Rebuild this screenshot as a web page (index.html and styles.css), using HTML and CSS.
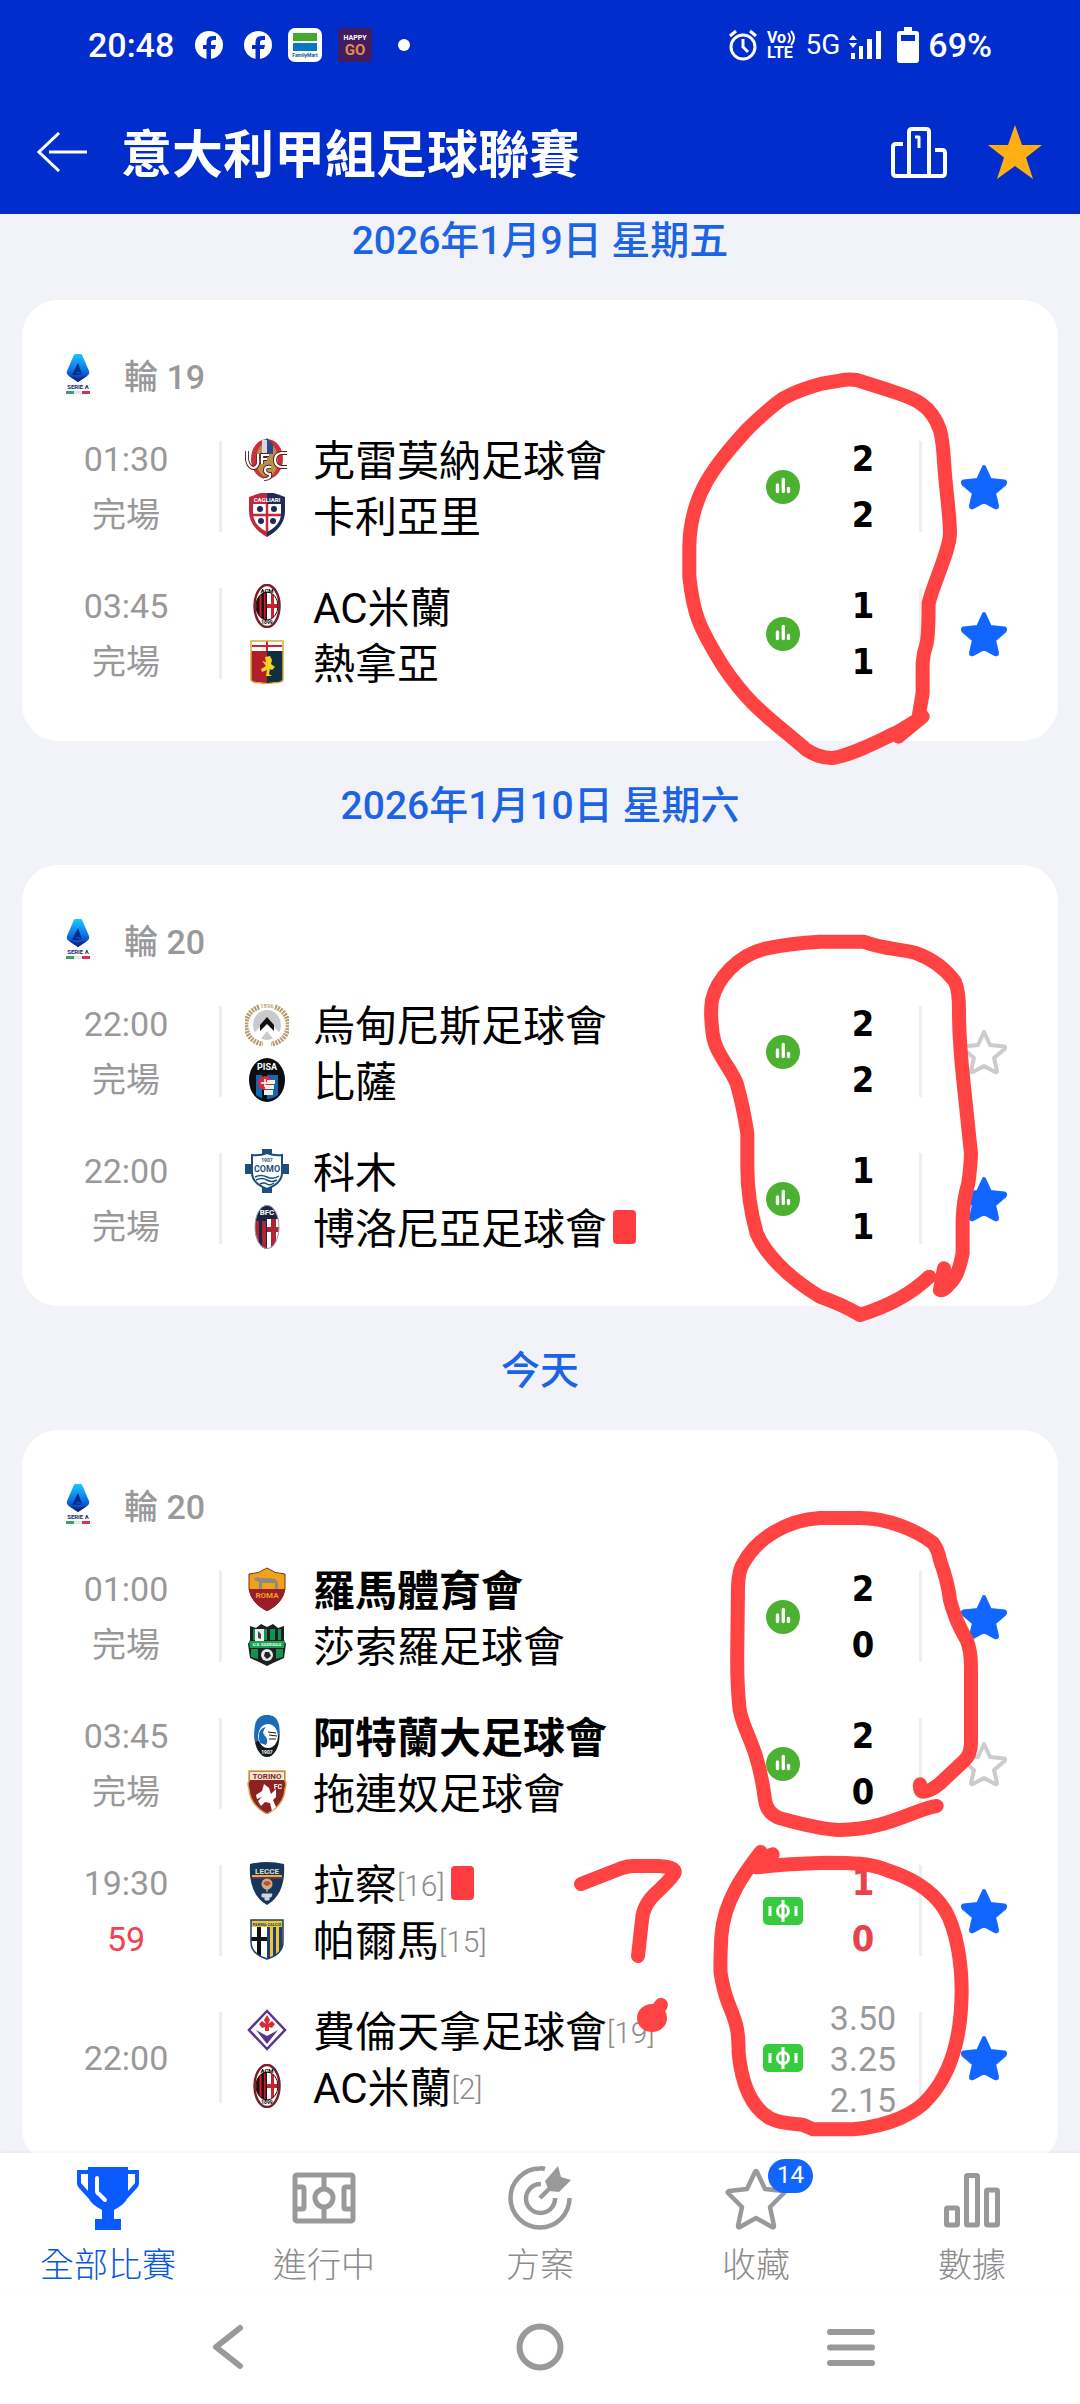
FILE: index.html
```html
<!DOCTYPE html>
<html lang="zh-Hant">
<head>
    <meta charset="UTF-8">
    <meta name="viewport" content="width=device-width, initial-scale=1.0">
    <title>意大利甲組足球聯賽</title>
    <link rel="stylesheet" href="styles.css">
</head>
<body>
    <!-- gradients and clip shapes for the crests -->
    <svg class="paints" aria-hidden="true">
        <defs>
            <linearGradient id="serieBlue" x1="0" y1="0" x2="0" y2="1">
                <stop offset="0" stop-color="#19c8fa"/>
                <stop offset=".6" stop-color="#0b6fe8"/>
                <stop offset="1" stop-color="#0a2a8c"/>
            </linearGradient>
            <clipPath id="milanClip"><ellipse cx="22" cy="22" rx="11" ry="14"/></clipPath>
            <clipPath id="bolognaClip"><ellipse cx="22" cy="22" rx="12" ry="22"/></clipPath>
            <clipPath id="genoaClip"><path d="M6 1h32v38q0 3-5 3.500Q25 43 22 44 19 43 11 42.500 6 42 6 39z"/></clipPath>
            <clipPath id="parmaClip"><path d="M6 3h32v22q0 12-16 17Q6 37 6 25z"/></clipPath>
        </defs>
    </svg>
    <!-- shared icons -->
    <svg class="sprite" aria-hidden="true">
        <symbol id="serieA" viewBox="0 0 24 40">
            <path d="M9 0h6q1 0 2 3l6 14q1 3-2 5l-9 6-9-6q-3-2-2-5L7 3q1-3 2-3z" fill="url(#serieBlue)"/>
            <path d="M12 9l4 11-4-2H9l7 3H6z" fill="#0a2a8c"/>
            <path d="M3 22l9 2 9-2-9 6z" fill="#0a2a8c"/>
            <text x="12" y="35" font-size="6" font-weight="700" text-anchor="middle" fill="#1a2870">SERIE A</text>
            <path d="M0 37h8v3H0z" fill="#3aa267"/><path d="M8 37h8v3H8z" fill="#e6e6e6"/><path d="M16 37h8v3h-8z" fill="#dc2f52"/>
        </symbol>
        <symbol id="star" viewBox="0 0 48 46">
            <path d="M24 3l6 13 14.500 1.500q1.500 1-.5 3L34 29l3 13q0 2-2 1l-11-6-11 6q-2 1-2-1l3-13L4 20.500q-2-2-.5-3L18 16z" stroke-width="4" stroke-linejoin="round"/>
        </symbol>
        <symbol id="stats" viewBox="0 0 34 34">
            <circle cx="17" cy="17" r="17" fill="#4cb030"/>
            <path d="M11.500 15v6.500M17.300 9.500v12M22.500 18.500v3" stroke="#fff" stroke-width="3.400" stroke-linecap="round"/>
        </symbol>
        <symbol id="live" viewBox="0 0 40 28">
            <rect width="40" height="28" rx="5" fill="#36cc3e"/>
            <circle cx="20" cy="14" r="5.500" fill="none" stroke="#fff" stroke-width="3"/>
            <path d="M20 3v22M7 9v10M33 9v10" stroke="#fff" stroke-width="3"/>
        </symbol>
        <symbol id="cremonese" viewBox="0 0 44 44">
            <ellipse cx="22" cy="22" rx="16" ry="20" fill="#c8323c"/>
            <ellipse cx="22" cy="23" rx="11" ry="17" fill="#b8904a"/>
            <path d="M22 1l6 6v10H17V7z" fill="#2f4b86"/><path d="M17 3h5v14h-5z" fill="#d8d8dc"/>
            <path d="M2 14v9q2 8 7 8 5-2 4-8v-6M17 27v-9h7M17 22h5M42 16h-6q-6 1-6 7t6 7h6M26 30q-6-1-6 3t5 4q1 5-6 5" fill="none" stroke="#5a1a22" stroke-width="4"/>
            <path d="M2 14v9q2 8 7 8 5-2 4-8v-6M17 27v-9h7M17 22h5M42 16h-6q-6 1-6 7t6 7h6M26 30q-6-1-6 3t5 4q1 5-6 5" fill="none" stroke="#fff" stroke-width="2.200"/>
        </symbol>
        <symbol id="cagliari" viewBox="0 0 44 44">
            <path d="M4 4q18-7 18-4v44Q4 34 4 18z" fill="#c0283c"/><path d="M22 0q0-3 18 4v14Q40 34 22 44z" fill="#1e2b57"/>
            <path d="M8 11h28v9q0 12-14 19Q8 32 8 20z" fill="#fff"/>
            <path d="M22 11v28M8 22h28" stroke="#c8283c" stroke-width="2.500"/>
            <g fill="#1e2b57"><circle cx="15" cy="16" r="3"/><circle cx="29" cy="16" r="3"/><circle cx="16" cy="28" r="3"/><circle cx="28" cy="28" r="3"/></g>
            <text x="22" y="9" font-size="6" font-weight="700" text-anchor="middle" fill="#fff">CAGLIARI</text>
        </symbol>
        <symbol id="milan" viewBox="0 0 44 44">
            <ellipse cx="22" cy="22" rx="12.500" ry="21" fill="#fff" stroke="#7a1e28" stroke-width="2.500"/>
            <g clip-path="url(#milanClip)">
                <path d="M8 8h15v28H8z" fill="#d0202c"/><path d="M12 8h2.500v28H12zM16.500 8H19v28h-2.500zM20.500 8H22v28h-1.500z" fill="#2a0d10"/>
                <path d="M22 8h12v28H22z" fill="#fff"/><path d="M26 8h3v28h-3zM22 20h12v4H22z" fill="#d0202c"/>
            </g>
            <ellipse cx="22" cy="22" rx="11" ry="14" fill="none" stroke="#2a0d10"/>
            <text x="22" y="9" font-size="6" font-weight="700" text-anchor="middle">ACM</text>
            <text x="22" y="40" font-size="5" font-weight="700" text-anchor="middle">1899</text>
        </symbol>
        <symbol id="genoa" viewBox="0 0 44 44">
            <g clip-path="url(#genoaClip)">
                <path d="M6 0h16v44H6z" fill="#b01e28"/><path d="M22 0h16v44H22z" fill="#10303f"/><path d="M6 0h32v11H6z" fill="#fff"/>
                <path d="M7 6h30M22 1v10" stroke="#d0202c" stroke-width="2"/>
            </g>
            <path d="M6 1h32v38q0 3-5 3.500Q25 43 22 44 19 43 11 42.500 6 42 6 39z" fill="none" stroke="#d4ac3c" stroke-width="1.500"/>
            <path d="M20 17l5-1 2 4-1 4 4 3-3 3-2-1-1 5 3 2h-6l1-6-5 2-1-3 5-3-4-5 4 1z" fill="#f4d224"/>
        </symbol>
        <symbol id="udinese" viewBox="0 0 44 44">
            <path d="M14 5A19 19 0 0 0 18 42M30 5A19 19 0 0 1 26 42" fill="none" stroke="#b49a6c" stroke-width="5" stroke-dasharray="2 1"/>
            <ellipse cx="22" cy="23" rx="14" ry="15" fill="#c9cacc"/>
            <path d="M9 31l13-13 13 13-6 7-7-9-7 9z" fill="#fff"/>
            <path d="M22 15l7 8v6l-7-7-7 7v-6z" fill="#111"/>
            <text x="22" y="6" font-size="6" text-anchor="middle" fill="#a08a60">1896</text>
        </symbol>
        <symbol id="pisa" viewBox="0 0 44 44">
            <ellipse cx="22" cy="22" rx="18" ry="22" fill="#0c0d12"/>
            <path d="M11 17h22v20q-11 8-22 0z" fill="#1567ae"/>
            <path d="M17 16h5v26h-5z" fill="#0c0d12"/>
            <circle cx="20" cy="25" r="7" fill="#d42a3c"/><path d="M20 21v8M16 25h8" stroke="#fff" stroke-width="1.500"/>
            <path d="M22 22h8v4h-8zM20 27h9v4h-9zM19 32h9v5h-9z" fill="#f2efe6"/>
            <text x="22" y="12" font-size="9" font-weight="700" text-anchor="middle" fill="#fff">PISA</text>
        </symbol>
        <symbol id="como" viewBox="0 0 44 44">
            <path d="M17 0h10v44H17zM0 15h44v10H0z" fill="#1d4f7c"/>
            <path d="M7 6q8 1 15-2 7 3 15 2v18q0 10-15 16Q7 34 7 24z" fill="#fff" stroke="#1d4f7c" stroke-width="2"/>
            <text x="22" y="23" font-size="9" font-weight="700" text-anchor="middle" fill="#1d4f7c">COMO</text>
            <text x="22" y="13" font-size="5" font-weight="700" text-anchor="middle" fill="#1d4f7c">1907</text>
            <path d="M10 28q6-3 12 0t12-1M11 31q6-3 11 0t10 0M15 35q4-2 7 0t7-1" fill="none" stroke="#1d4f7c" stroke-width="1.500"/>
        </symbol>
        <symbol id="bologna" viewBox="0 0 44 44">
            <g clip-path="url(#bolognaClip)">
                <path d="M0 0h44v44H0z" fill="#1c2540"/>
                <path d="M8 16h6v28H8zM17 16h4v28h-4z" fill="#b02436"/><path d="M22 14h14v30H22z" fill="#fff"/>
                <path d="M26 14h5v30h-5zM22 22h14v5H22z" fill="#b02436"/>
            </g>
            <ellipse cx="22" cy="22" rx="12" ry="21.500" fill="none" stroke="#9aa0b0"/>
            <text x="22" y="10" font-size="8" font-weight="700" text-anchor="middle" fill="#fff">BFC</text>
        </symbol>
        <symbol id="roma" viewBox="0 0 44 44">
            <path d="M4 7q10 0 18-6 8 6 18 6v15H4z" fill="#f0a218"/><path d="M4 22h36q-2 14-18 22Q6 36 4 22z" fill="#9c1c2c"/>
            <path d="M4 7q10 0 18-6 8 6 18 6v15q-2 14-18 22Q6 36 4 22z" fill="none" stroke="#7a2a1c"/>
            <path d="M11 10l4 1q10 0 15 1 4 2 3 10h-3v-6H17v6h-3v-7l-5-2z" fill="#8c8a88"/>
            <text x="22" y="31" font-size="8" font-weight="700" text-anchor="middle" fill="#f0a218">ROMA</text>
        </symbol>
        <symbol id="sassuolo" viewBox="0 0 44 44">
            <path d="M5 3l6 2 5-4 6 3 6-3 5 4 6-2v14l2 4-2 14-11 5-6 3-6-3-11-5-2-14 2-4z" fill="#1e1f20"/>
            <path d="M8 6h28v11H8z" fill="#12924c"/><path d="M22 6h3v11h-3zM30 6h3v11h-3z" fill="#1e1f20"/>
            <path d="M10 6h9v12h-9z" fill="#eee"/><path d="M13 8l3 3v5l-3-1z" fill="#444"/>
            <path d="M4 18h36l-1 7H5z" fill="#16a155"/>
            <path d="M6 26h7v10l-7-2zM31 26h7v8l-7 2z" fill="#12924c"/><circle cx="22" cy="32" r="6" fill="#e8e8e8"/>
            <path d="M20 29h4l2 4-4 3-3-3z" fill="#222"/>
            <text x="22" y="23" font-size="4" font-weight="700" text-anchor="middle" fill="#fff">U.S. SASSUOLO</text>
        </symbol>
        <symbol id="atalanta" viewBox="0 0 44 44">
            <ellipse cx="22" cy="22" rx="12.500" ry="21" fill="#15181c"/>
            <path d="M10 28Q6 1 22 1q14 0 12.500 20Z" fill="#1a6cb8"/>
            <ellipse cx="23" cy="22" rx="10" ry="12" fill="#fff"/>
            <path d="M15 29q-4-14 6-16-5 5-1 9 4 4 1 9z" fill="#1a6cb8"/>
            <path d="M23 18l8 1M24 21l8 1M24 25l7 0" stroke="#15181c"/>
            <text x="22" y="40" font-size="5" font-weight="700" text-anchor="middle" fill="#fff">1907</text>
        </symbol>
        <symbol id="torino" viewBox="0 0 44 44">
            <path d="M4 1h36v10q2 2 0 8-1 16-18 25Q5 35 4 19q-2-6 0-8z" fill="#8c2224" stroke="#d8a24a" stroke-width="1.500"/>
            <path d="M5 2h34v8H5z" fill="#f3e9d8"/>
            <text x="22" y="9" font-size="8" font-weight="700" text-anchor="middle" fill="#8c2224">TORINO</text>
            <text x="33" y="19" font-size="7" font-weight="700" text-anchor="middle" fill="#fff">FC</text>
            <path d="M19 14l5 4 2 6 5-5v8l-3 3 3 7-4 4-2-8-5-1-4 4-3-5 4-4-5 2-1-4 6-4z" fill="#fff"/>
        </symbol>
        <symbol id="lecce" viewBox="0 0 44 44">
            <path d="M5 3q17-4 34 0 2 30-17 41Q3 33 5 3z" fill="#16365c"/>
            <path d="M7 15h30" stroke="#e0b43c" stroke-width="2"/><path d="M7 17h30" stroke="#c8283c"/>
            <text x="22" y="13" font-size="8" font-weight="700" text-anchor="middle" fill="#e8e0c8">LECCE</text>
            <circle cx="22" cy="23" r="5.500" fill="#d8a878"/><path d="M18 22q4-4 8 0-4 6-8 0" fill="#a8544a"/><path d="M22 28v3M17 33h10l-1 3h-2v3h-4v-3h-3z" stroke="#cfd4dc" fill="#cfd4dc"/>
        </symbol>
        <symbol id="parma" viewBox="0 0 44 44">
            <g clip-path="url(#parmaClip)">
                <path d="M6 3h32v40H6z" fill="#fff"/><path d="M6 3h32v7H6z" fill="#f0c830"/>
                <path d="M12 10h4v32h-4zM6 20h16v4H6z" fill="#111"/>
                <path d="M22 10h16v32H22z" fill="#f0c830"/><path d="M22 10h3v32h-3zM28 10h3v32h-3zM34 10h3v32h-3z" fill="#1e3c78"/>
            </g>
            <path d="M6 3h32v22q0 12-16 17Q6 37 6 25z" fill="none" stroke="#1e3c78" stroke-width="1.500"/>
            <text x="22" y="9" font-size="4" font-weight="700" text-anchor="middle" fill="#1e3c78">PARMA CALCIO</text>
        </symbol>
        <symbol id="fiorentina" viewBox="0 0 44 44">
            <path d="M22 3l18 19-18 19L4 22z" fill="#fff" stroke="#5a3490" stroke-width="2.500"/>
            <path d="M11 22l11 6 11-6-11 14z" fill="#5a3490"/>
            <path d="M22 7l3 5-2 4 4-3 3 3-3 4-3-1v4h-4v-4l-3 1-3-4 3-3 4 3-2-4z" fill="#dc2a34"/>
        </symbol>
    </svg>

    <header class="header">
        <div class="status-bar">
            <div class="status-left">
                <span class="clock">20:48</span>
                <svg class="status-app" width="28" height="30" viewBox="0 0 28 30"><circle cx="14" cy="15" r="14" fill="#fff"/><path d="M11.500 30V19H8v-4h3.500v-3q0-6 6-6H21v4h-2.500q-2.500 0-2.500 2.500V15h5l-1 4h-4v11z" fill="#002dcb"/></svg>
                <svg class="status-app" width="28" height="30" viewBox="0 0 28 30"><circle cx="14" cy="15" r="14" fill="#fff"/><path d="M11.500 30V19H8v-4h3.500v-3q0-6 6-6H21v4h-2.500q-2.500 0-2.500 2.500V15h5l-1 4h-4v11z" fill="#002dcb"/></svg>
                <svg class="status-app" width="34" height="34" viewBox="0 0 34 34"><rect width="34" height="34" rx="7" fill="#fff"/><path d="M5 5h24v8H5z" fill="#41ab2e"/><path d="M5 15h24v8H5z" fill="#0a78c0"/><text x="17" y="29" font-size="5" font-weight="700" text-anchor="middle" fill="#0a5a96">FamilyMart</text></svg>
                <svg class="status-app" width="34" height="34" viewBox="0 0 34 34"><rect width="34" height="34" rx="3" fill="#401c60"/><text x="17" y="12" font-size="7" font-weight="700" text-anchor="middle" fill="#fff">HAPPY</text><text x="17" y="27" font-size="15" font-weight="700" text-anchor="middle" fill="#ec8a4a">GO</text></svg>
                <span class="dot"></span>
            </div>
            <div class="status-right">
                <svg width="30" height="32" viewBox="0 0 30 32" fill="none" stroke="#fff" stroke-width="3"><circle cx="15" cy="18" r="12"/><path d="M15 10v8l5 5M2 7l6-5M28 7l-6-5"/></svg>
                <svg width="30" height="40" viewBox="0 0 30 40"><text x="0" y="18" font-size="16" font-weight="700" fill="#fff">Vo</text><path d="M21 8q4 5 0 10M24 6q6 7 0 14" fill="none" stroke="#fff" stroke-width="2"/><text x="0" y="33" font-size="16" font-weight="700" fill="#fff">LTE</text></svg>
                <span class="network">5G</span>
                <svg class="signal" width="32" height="30" viewBox="0 0 32 30" fill="#fff"><path d="M4 5l4 5H0zM4 18l4-5H0zM2 23h4v6H2zM10 16h4v13h-4zM18 9h5v20h-5zM27 1h5v28h-5z"/></svg>
                <svg class="battery" width="22" height="36" viewBox="0 0 22 36"><path d="M7 0h8v4h4q3 0 3 3v26q0 3-3 3H3q-3 0-3-3V7q0-3 3-3h4z" fill="#fff"/><path d="M4 8h14v6H4z" fill="#002dcb"/></svg>
                <span class="clock">69%</span>
            </div>
        </div>
        <div class="title-bar">
            <button class="icon-btn" aria-label="返回">
                <svg width="50" height="40" viewBox="0 0 50 40" fill="none" stroke="#fff" stroke-width="3"><path d="M22 1L2 20l20 19M12 20h38"/></svg>
            </button>
            <h1>意大利甲組足球聯賽</h1>
            <button class="icon-btn" aria-label="積分榜">
                <svg width="56" height="52" viewBox="0 0 56 52" fill="none" stroke="#fff" stroke-width="4" stroke-linejoin="round"><path d="M12 18H5q-3 0-3 3v26q0 3 3 3h46q3 0 3-3V27q0-3-3-3h-7M18 50V6q0-3 3-3h14q3 0 3 3v44"/><path d="M24 11h4v11" stroke-width="3"/></svg>
            </button>
            <button class="icon-btn" aria-label="收藏聯賽">
                <svg width="56" height="56" viewBox="0 0 56 56"><path d="M28 1l7 20h20L39 33.500 46 55 28 42 10 55l7-21.500L1 21h20z" fill="#ffaf14"/></svg>
            </button>
        </div>
    </header>

    <main class="list">
        <h2 class="date">2026年1月9日 星期五</h2>
        <section class="card">
            <h3 class="round"><svg width="24" height="40"><use href="#serieA"/></svg>輪 19</h3>
            <article class="match">
                <div class="time"><span>01:30</span><span>完場</span></div>
                <div class="teams">
                    <p class="team"><svg width="44" height="44"><use href="#cremonese"/></svg>克雷莫納足球會</p>
                    <p class="team"><svg width="44" height="44"><use href="#cagliari"/></svg>卡利亞里</p>
                </div>
                <div class="info"><svg width="34" height="34"><use href="#stats"/></svg></div>
                <div class="score"><span>2</span><span>2</span></div>
                <button class="fav on" aria-label="收藏"><svg width="48" height="46"><use href="#star"/></svg></button>
            </article>
            <article class="match">
                <div class="time"><span>03:45</span><span>完場</span></div>
                <div class="teams">
                    <p class="team"><svg width="44" height="44"><use href="#milan"/></svg>AC米蘭</p>
                    <p class="team"><svg width="44" height="44"><use href="#genoa"/></svg>熱拿亞</p>
                </div>
                <div class="info"><svg width="34" height="34"><use href="#stats"/></svg></div>
                <div class="score"><span>1</span><span>1</span></div>
                <button class="fav on" aria-label="收藏"><svg width="48" height="46"><use href="#star"/></svg></button>
            </article>
        </section>

        <h2 class="date">2026年1月10日 星期六</h2>
        <section class="card">
            <h3 class="round"><svg width="24" height="40"><use href="#serieA"/></svg>輪 20</h3>
            <article class="match">
                <div class="time"><span>22:00</span><span>完場</span></div>
                <div class="teams">
                    <p class="team"><svg width="44" height="44"><use href="#udinese"/></svg>烏甸尼斯足球會</p>
                    <p class="team"><svg width="44" height="44"><use href="#pisa"/></svg>比薩</p>
                </div>
                <div class="info"><svg width="34" height="34"><use href="#stats"/></svg></div>
                <div class="score"><span>2</span><span>2</span></div>
                <button class="fav" aria-label="收藏"><svg width="48" height="46"><use href="#star"/></svg></button>
            </article>
            <article class="match">
                <div class="time"><span>22:00</span><span>完場</span></div>
                <div class="teams">
                    <p class="team"><svg width="44" height="44"><use href="#como"/></svg>科木</p>
                    <p class="team"><svg width="44" height="44"><use href="#bologna"/></svg>博洛尼亞足球會<span class="red-card"></span></p>
                </div>
                <div class="info"><svg width="34" height="34"><use href="#stats"/></svg></div>
                <div class="score"><span>1</span><span>1</span></div>
                <button class="fav on" aria-label="收藏"><svg width="48" height="46"><use href="#star"/></svg></button>
            </article>
        </section>

        <h2 class="date">今天</h2>
        <section class="card">
            <h3 class="round"><svg width="24" height="40"><use href="#serieA"/></svg>輪 20</h3>
            <article class="match">
                <div class="time"><span>01:00</span><span>完場</span></div>
                <div class="teams">
                    <p class="team winner"><svg width="44" height="44"><use href="#roma"/></svg>羅馬體育會</p>
                    <p class="team"><svg width="44" height="44"><use href="#sassuolo"/></svg>莎索羅足球會</p>
                </div>
                <div class="info"><svg width="34" height="34"><use href="#stats"/></svg></div>
                <div class="score"><span>2</span><span>0</span></div>
                <button class="fav on" aria-label="收藏"><svg width="48" height="46"><use href="#star"/></svg></button>
            </article>
            <article class="match">
                <div class="time"><span>03:45</span><span>完場</span></div>
                <div class="teams">
                    <p class="team winner"><svg width="44" height="44"><use href="#atalanta"/></svg>阿特蘭大足球會</p>
                    <p class="team"><svg width="44" height="44"><use href="#torino"/></svg>拖連奴足球會</p>
                </div>
                <div class="info"><svg width="34" height="34"><use href="#stats"/></svg></div>
                <div class="score"><span>2</span><span>0</span></div>
                <button class="fav" aria-label="收藏"><svg width="48" height="46"><use href="#star"/></svg></button>
            </article>
            <article class="match">
                <div class="time"><span>19:30</span><span class="minute">59</span></div>
                <div class="teams">
                    <p class="team"><svg width="44" height="44"><use href="#lecce"/></svg>拉察<span class="rank">[16]</span><span class="red-card"></span></p>
                    <p class="team"><svg width="44" height="44"><use href="#parma"/></svg>帕爾馬<span class="rank">[15]</span></p>
                </div>
                <div class="info"><svg width="40" height="28"><use href="#live"/></svg></div>
                <div class="score playing"><span>1</span><span>0</span></div>
                <button class="fav on" aria-label="收藏"><svg width="48" height="46"><use href="#star"/></svg></button>
            </article>
            <article class="match">
                <div class="time"><span>22:00</span></div>
                <div class="teams">
                    <p class="team"><svg width="44" height="44"><use href="#fiorentina"/></svg>費倫天拿足球會<span class="rank">[19]</span></p>
                    <p class="team"><svg width="44" height="44"><use href="#milan"/></svg>AC米蘭<span class="rank">[2]</span></p>
                </div>
                <div class="info"><svg width="40" height="28"><use href="#live"/></svg></div>
                <div class="odds"><span>3.50</span><span>3.25</span><span>2.15</span></div>
                <button class="fav on" aria-label="收藏"><svg width="48" height="46"><use href="#star"/></svg></button>
            </article>
        </section>
    </main>

    <nav class="tabs">
        <a class="tab active" href="#">
            <svg width="64" height="64" viewBox="0 0 64 64"><path d="M12 1h40v3h11v13q0 3-2 5L51 33q-2 4-8 8l-5 3v9h7v11H19V53h7v-9l-5-3q-6-4-8-8L3 22q-2-2-2-5V4h11zM5 8v9l7 8V8zm47 0v17l7-8V8z" fill="#0a5aff" fill-rule="evenodd"/><path d="M21 12v13q0 2 2 3l6 6" fill="none" stroke="#fff" stroke-width="4" stroke-linecap="round"/></svg>
            全部比賽
        </a>
        <a class="tab" href="#">
            <svg width="64" height="64" viewBox="0 0 64 64" fill="none" stroke="#999" stroke-width="5"><rect x="3" y="9" width="58" height="46" rx="2"/><circle cx="32" cy="32" r="9"/><path d="M32 9v14M32 41v14M3 21h7q2 0 2 2v18q0 2-2 2H3M61 21h-7q-2 0-2 2v18q0 2 2 2h7"/></svg>
            進行中
        </a>
        <a class="tab" href="#">
            <svg width="64" height="64" viewBox="0 0 64 64" fill="none" stroke="#999" stroke-width="4.500"><path d="M37 3Q34 2 32 2.500A29.500 29.500 0 1 0 61.500 32M33 18a14.500 14.500 0 1 0 14 14M32 32l9-9"/><path d="M37 15L50 0l3 11 10 3-12 12-10-1z" fill="#999" stroke="none"/></svg>
            方案
        </a>
        <a class="tab" href="#">
            <span class="tab-icon">
                <svg width="64" height="64" viewBox="0 0 64 64" fill="none" stroke="#999" stroke-width="4.500" stroke-linejoin="round"><path d="M31 6q1-2 2 0l8 17 18 2q2 1 1 2L46 41l4 19q0 2-2 1L32 52l-16 9q-2 1-2-1l4-19L4 27q-1-1 1-2l18-2z"/></svg>
                <span class="count">14</span>
            </span>
            收藏
        </a>
        <a class="tab" href="#">
            <svg width="64" height="64" viewBox="0 0 64 64" fill="none" stroke="#999" stroke-width="5"><rect x="6.500" y="42" width="11" height="17" rx="1"/><rect x="26.500" y="9.500" width="11" height="49.500" rx="1"/><rect x="46.500" y="24" width="11" height="35" rx="1"/></svg>
            數據
        </a>
    </nav>

    <div class="system-nav">
        <button class="icon-btn" aria-label="返回"><svg width="50" height="50" viewBox="0 0 50 50" fill="none" stroke="#999" stroke-width="6" stroke-linecap="round" stroke-linejoin="round"><path d="M36 6L12 25l24 19"/></svg></button>
        <button class="icon-btn" aria-label="主頁"><svg width="50" height="50" viewBox="0 0 50 50" fill="none" stroke="#999" stroke-width="6"><circle cx="25" cy="25" r="20.500"/></svg></button>
        <button class="icon-btn" aria-label="選單"><svg width="50" height="50" viewBox="0 0 50 50" stroke="#999" stroke-width="6" stroke-linecap="round"><path d="M4 10h42M4 25.500h42M4 41h42"/></svg></button>
    </div>

    <!-- hand-drawn marks -->
    <svg class="marks" viewBox="0 0 1080 2404" preserveAspectRatio="xMidYMin meet" aria-hidden="true">
        <g stroke-width="42">
            <path transform="translate(640 350) scale(.3333)" d="M836 1100L848 1030V940Q850 910 860 880 866 850 866 760C880 700 930 600 930 550 930 490 915 400 912 330Q908 270 900 240C870 150 800 140 745 120L650 90Q625 86 600 92L550 100Q480 118 430 145 380 180 320 240C230 340 150 430 148 590V680C160 790 175 830 250 950 330 1070 390 1105 500 1200Q540 1226 580 1224C650 1210 720 1170 775 1145L848 1100 775 1160"/>
            <path transform="translate(640 900) scale(.3333)" d="M868 1130Q790 1205 660 1245 610 1215 540 1190C440 1130 375 1060 350 1000Q322 900 322 800V700Q310 620 290 550C270 500 225 460 218 400Q210 340 216 300C230 240 290 165 380 145Q450 130 540 125H670C740 150 780 145 830 160Q900 185 945 245 957 270 957 330 957 420 970 540 985 680 993 760 992 800 985 850 970 900 968 960V1060Q955 1130 930 1150 910 1175 900 1170L912 1105"/>
            <path transform="translate(640 1480) scale(.3333)" d="M890 978C830 985 740 1050 600 1050 530 1048 460 1025 420 1015Q380 1000 375 960 365 880 345 820C325 760 300 720 298 680Q290 600 292 500L294 320Q296 270 310 250C350 175 440 120 540 114H660C740 114 830 150 880 190Q895 210 900 240 925 310 930 360 945 420 980 480 993 510 993 560V790Q993 825 970 845L900 910Q870 935 850 935 838 935 840 913"/>
            <path transform="translate(640 1830) scale(.3333)" d="M398 73L345 90 362 66C320 120 250 210 244 320Q240 400 242 430 250 480 265 520C290 580 296 600 296 670 305 760 330 830 390 865 430 885 470 880 490 885L520 898H640C750 888 830 850 870 800 940 720 965 600 965 480 965 400 950 300 915 240 870 170 800 140 740 120 690 100 640 98 560 98Q480 100 420 105L350 112"/>
        </g>
        <path stroke-width="14" d="M581 1884L622 1868Q628 1866 634 1866H658Q678 1867 674 1874 668 1882 656 1893 643 1905 642 1920L638 1956"/>
        <path stroke-width="14" d="M661 2005L656 2012"/>
        <ellipse cx="652" cy="2018" rx="8" ry="7" stroke-width="14" fill="#ff4242"/>
    </svg>
</body>
</html>
```
FILE: styles.css
```css
* {
    box-sizing: border-box;
}
body {
    font-family: Roboto, "Noto Sans CJK TC", sans-serif;
    background-color: #f2f3f8;
    color: #000;
    margin: 0;
    height: 100vh;
    display: flex;
    flex-direction: column;
    position: relative;
    overflow: hidden;
}
h1, h2, h3, p {
    margin: 0;
}
svg {
    display: block;
    flex: none;
}
button {
    background: none;
    border: none;
    padding: 0;
    cursor: pointer;
}
.paints {
    position: absolute;
    width: 0;
    height: 0;
}
.sprite {
    display: none;
}

/* header */
.header {
    background: #002dcb;
    color: #fff;
    position: relative;
    z-index: 1;
    flex: none;
}
.status-bar {
    display: flex;
    justify-content: space-between;
    align-items: center;
    height: 90px;
    padding: 0 88px;
}
.status-left, .status-right {
    display: flex;
    align-items: center;
}
.clock {
    font-size: 34px;
    line-height: 40px;
    font-weight: 500;
}
.status-left {
    gap: 16px;
}
.status-app:nth-child(2) {
    margin: 0 5px 0 5px;
}
.dot {
    width: 12px;
    height: 12px;
    border-radius: 50%;
    background: #fff;
    margin-left: 10px;
}
.status-right {
    gap: 9px;
}
.network {
    font-size: 28px;
    line-height: 40px;
}
.battery {
    margin-left: 7px;
}
.title-bar {
    display: flex;
    align-items: center;
    gap: 40px;
    height: 124px;
    padding: 0 37px;
}
h1 {
    flex: 1;
    font-size: 51px;
    line-height: 60px;
    font-weight: 700;
    margin-left: -6px;
    padding-top: 8px;
}

/* match list, scrolled a little under the header */
.list {
    flex: 1;
    min-height: 0;
    overflow: hidden;
    margin-top: -38px;
    padding: 0 22px;
}
.date {
    height: 124px;
    color: #1c64e4;
    font-size: 39px;
    line-height: 130px;
    font-weight: 500;
    text-align: center;
}
.card {
    background: #fff;
    border-radius: 36px;
    padding: 38px 10px 34px 34px;
}
.round {
    display: flex;
    align-items: center;
    gap: 34px;
    height: 72px;
    margin-bottom: 3px;
    padding-left: 10px;
    color: #999;
    font-size: 34px;
    font-weight: 500;
}
.match {
    display: flex;
    align-items: center;
    height: 147px;
}
.time {
    width: 140px;
    margin-right: 23px;
    display: flex;
    flex-direction: column;
    align-items: center;
    color: #999;
    font-size: 34px;
    line-height: 56px;
}
.time .minute {
    color: #f0434f;
}
.teams {
    flex: 1;
    position: relative;
    padding-left: 26px;
}
.teams::before, .fav::before {
    content: "";
    position: absolute;
    left: 0;
    top: 50%;
    width: 3px;
    height: 91px;
    margin-top: -46px;
    background: #eee;
}
.team {
    display: flex;
    align-items: center;
    height: 56px;
    padding-top: 6px;
    font-size: 42px;
    line-height: 50px;
    white-space: nowrap;
}
.team svg {
    margin: 0 24px 6px 0;
}
.winner {
    font-weight: 700;
}
.rank {
    color: #8c8c8c;
    font-size: 30px;
    font-weight: 300;
}
.red-card {
    width: 23px;
    height: 34px;
    margin: 0 0 6px 6px;
    border-radius: 4px;
    background: #ff3d40;
}
.info {
    width: 48px;
    display: flex;
    justify-content: center;
}
.score, .odds {
    width: 112px;
    display: flex;
    flex-direction: column;
    align-items: center;
}
.score {
    font-family: "DejaVu Sans Condensed", "DejaVu Sans", sans-serif;
    font-size: 36px;
    font-weight: 700;
    line-height: 56px;
}
.score.playing {
    color: #e8434c;
}
.odds {
    padding-top: 3px;
    color: #999;
    font-size: 34px;
    line-height: 41px;
}
.fav {
    position: relative;
    display: flex;
    align-items: center;
    justify-content: center;
    width: 129px;
    height: 100%;
    fill: none;
    stroke: #ccc;
}
.fav.on {
    fill: #1066ff;
    stroke: #1066ff;
}

/* bottom tabs */
.tabs {
    display: flex;
    flex: none;
    height: 137px;
    background: #fff;
    box-shadow: 0 -1px 3px rgba(0, 0, 0, 0.06);
    position: relative;
}
.tab {
    flex: 1;
    display: flex;
    flex-direction: column;
    align-items: center;
    gap: 15px;
    padding-top: 13px;
    color: #8c8c8c;
    font-size: 34px;
    font-weight: 300;
    line-height: 40px;
    text-decoration: none;
}
.tab.active {
    color: #0a56e4;
}
.tab-icon {
    position: relative;
}
.count {
    position: absolute;
    top: -7px;
    left: 44px;
    width: 45px;
    height: 34px;
    border-radius: 17px;
    background: #1066ff;
    color: #fff;
    font-size: 24px;
    font-weight: 400;
    line-height: 32px;
    text-align: center;
}
.system-nav {
    display: flex;
    flex: none;
    justify-content: space-between;
    align-items: center;
    height: 114px;
    padding: 0 204px;
    background: #fff;
}
.marks {
    position: absolute;
    top: 0;
    left: 0;
    width: 100%;
    z-index: 2;
    fill: none;
    stroke: #ff4242;
    stroke-linecap: round;
    stroke-linejoin: round;
    pointer-events: none;
}
```
